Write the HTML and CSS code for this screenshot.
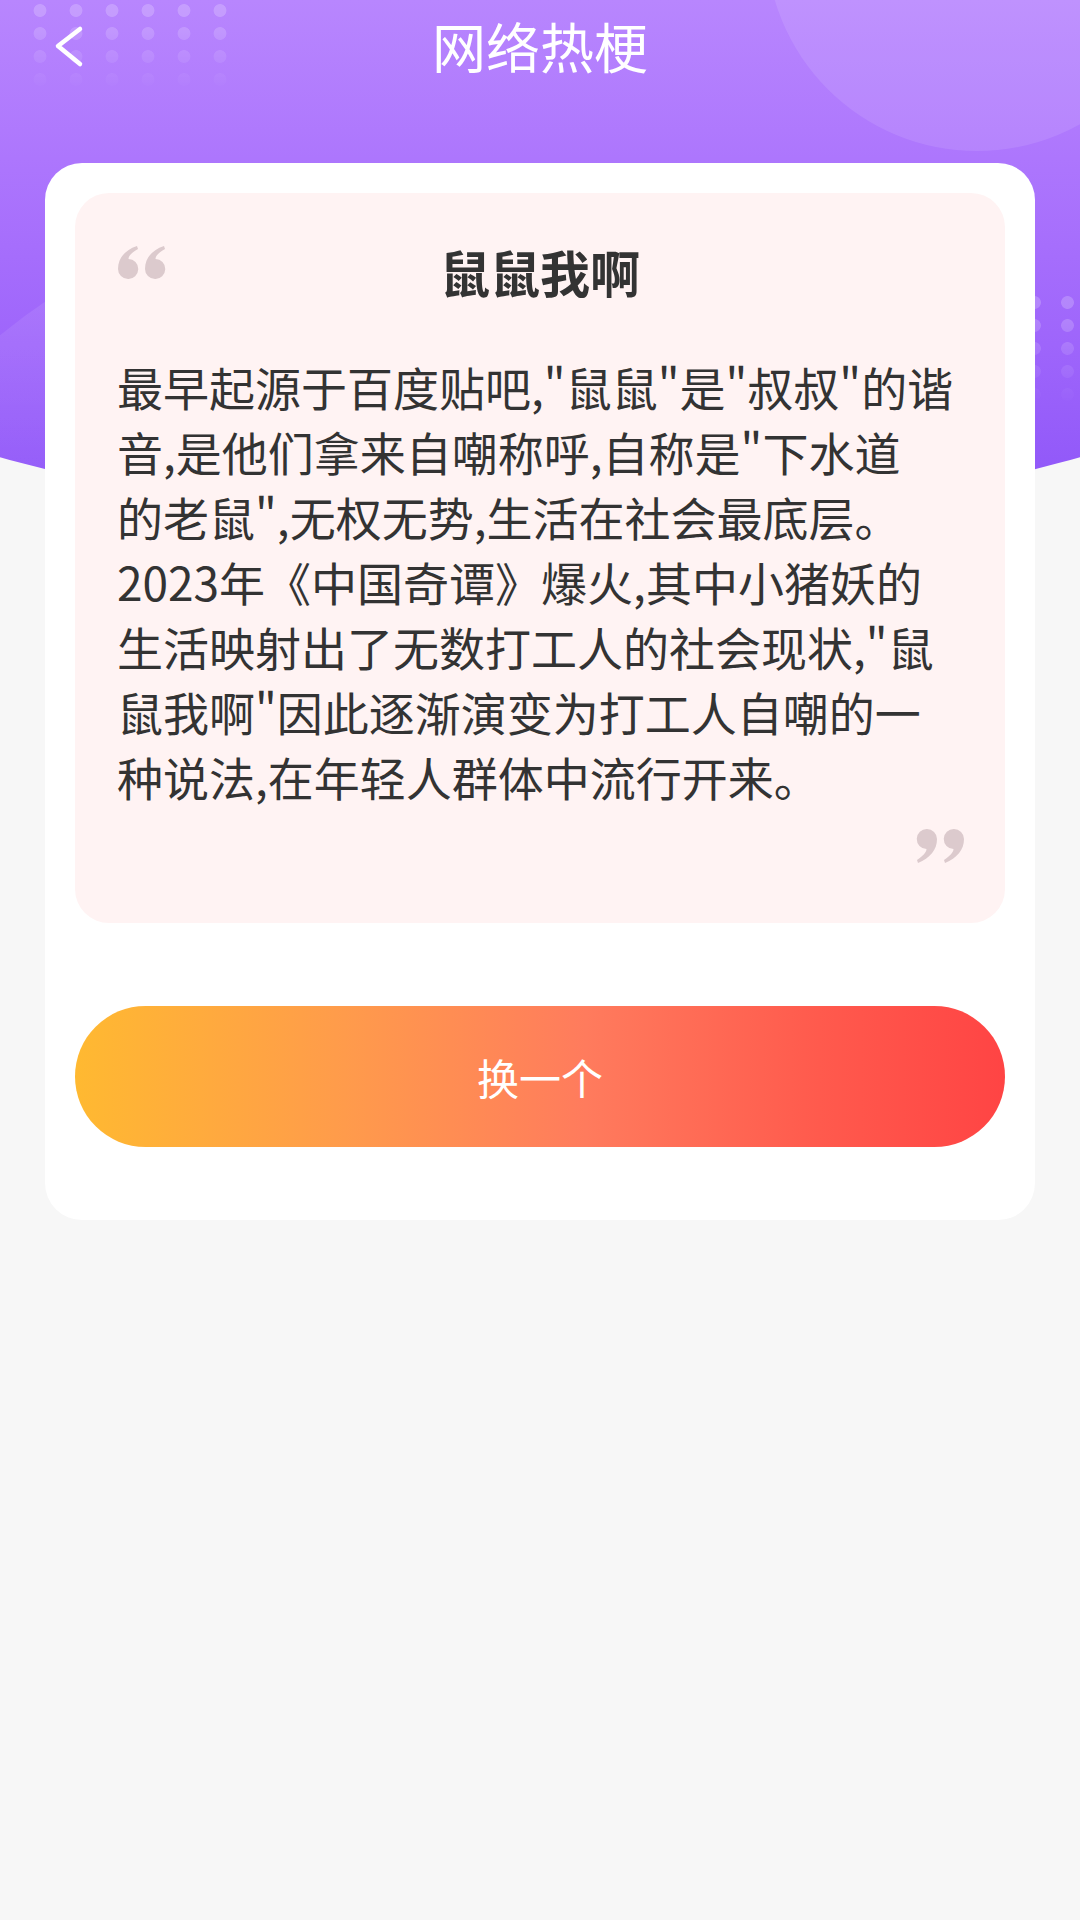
FILE: index.html
```html
<!DOCTYPE html>
<html lang="zh-CN">
<head>
  <meta charset="UTF-8">
  <meta name="viewport" content="width=device-width, initial-scale=1.0">
  <title>网络热梗</title>
  <link rel="stylesheet" href="styles.css">
</head>
<body>

  <div class="page">
    <!-- Purple header -->
    <div class="hero">
      <div class="bubble bubble-top"></div>
      <div class="bubble bubble-left"></div>
      <div class="dots dots-top"></div>
      <div class="dots dots-side"></div>

      <nav class="topbar">
        <a class="back" href="#">
          <svg width="34" height="46" viewBox="0 0 34 46">
            <path d="M26 5 L4 22 L26 40" fill="none" stroke="#fff" stroke-width="4.5" stroke-linecap="round" stroke-linejoin="round"/>
          </svg>
        </a>
        <h1>网络热梗</h1>
        <span></span>
      </nav>
    </div>

    <!-- Meme card -->
    <main class="card">
      <section class="quote-box">
        <div class="quote-head">
          <svg class="mark" width="49" height="34" viewBox="0 0 49 34">
            <g fill="#dccacd" transform="rotate(180 24.5 17)">
              <path d="M11 0 A10 10 0 0 1 21 10 C21 21 14 29 2 33 L1 30 C7 27 10.5 23 10.5 20 A10 10 0 0 1 11 0 Z"/>
              <path d="M38 0 A10 10 0 0 1 48 10 C48 21 41 29 29 33 L28 30 C34 27 37.5 23 37.5 20 A10 10 0 0 1 38 0 Z"/>
            </g>
          </svg>
          <h2>鼠鼠我啊</h2>
        </div>

        <p class="quote-text">最早起源于百度贴吧,"鼠鼠"是"叔叔"的谐<br>音,是他们拿来自嘲称呼,自称是"下水道<br>的老鼠",无权无势,生活在社会最底层。<br>2023年《中国奇谭》爆火,其中小猪妖的<br>生活映射出了无数打工人的社会现状,"鼠<br>鼠我啊"因此逐渐演变为打工人自嘲的一<br>种说法,在年轻人群体中流行开来。</p>

        <div class="quote-foot">
          <svg class="mark" width="49" height="36" viewBox="0 0 49 36">
            <g fill="#dccacd">
              <path d="M11 1 A10 10 0 0 1 21 11 C21 22 14 30 2 35 L1 32 C7 28 10.5 24 10.5 21 A10 10 0 0 1 11 1 Z"/>
              <path d="M38 1 A10 10 0 0 1 48 11 C48 22 41 30 29 35 L28 32 C34 28 37.5 24 37.5 21 A10 10 0 0 1 38 1 Z"/>
            </g>
          </svg>
        </div>
      </section>

      <button class="next-btn">换一个</button>
    </main>
  </div>

</body>
</html>
```

FILE: styles.css
```css
/* Global Styles */
* {
  margin: 0;
  padding: 0;
  box-sizing: border-box;
}

body {
  font-family: "Noto Sans CJK SC", "Noto Sans", sans-serif;
  background: #f7f7f7;
  color: #333;
  width: 1080px;
  min-height: 1920px;
  overflow: hidden;
}

/* Header */
.hero {
  position: relative;
  height: 530px;
  overflow: hidden;
  background: linear-gradient(180deg, #b886fe 0%, #ad76fd 30%, #9e65fb 65%, #8c53f8 100%);
  clip-path: ellipse(1100px 558px at 540px -29px);
}

.bubble {
  position: absolute;
  border-radius: 50%;
}

.bubble-top {
  width: 422px;
  height: 422px;
  left: 766px;
  top: -271px;
  background: rgba(255, 255, 255, 0.1);
}

.bubble-left {
  width: 1260px;
  height: 1260px;
  left: -230px;
  top: 192px;
  background: linear-gradient(180deg, rgba(255, 255, 255, 0.12), rgba(255, 255, 255, 0) 30%);
}

.dots {
  position: absolute;
  background-image: radial-gradient(circle, rgba(255, 255, 255, 0.2) 6px, transparent 6.8px);
  -webkit-mask-image: linear-gradient(180deg, #000 20%, transparent 100%);
  mask-image: linear-gradient(180deg, #000 20%, transparent 100%);
}

.dots-top {
  left: 22px;
  top: -1px;
  width: 216px;
  height: 92px;
  background-size: 36px 23px;
}

.dots-side {
  left: 1018px;
  top: 291px;
  width: 66px;
  height: 115px;
  background-size: 33px 23px;
}

.topbar {
  position: relative;
  height: 92px;
  display: grid;
  grid-template-columns: 160px 1fr 160px;
  align-items: center;
}

.back {
  display: flex;
  padding-left: 54px;
  padding-top: 2px;
}

.topbar h1 {
  text-align: center;
  color: #fff;
  font-size: 54px;
  font-weight: 400;
  line-height: 92px;
}

/* Card */
.card {
  position: relative;
  margin: -367px 45px 0;
  padding: 30px 30px 73px;
  background: #fff;
  border-radius: 37px;
}

.quote-box {
  background: #fff3f3;
  border-radius: 34px;
  padding: 50px 42px 59px;
}

.quote-head {
  display: grid;
  grid-template-columns: 1fr auto 1fr;
  align-items: start;
}

.quote-head .mark {
  margin-top: 2px;
}

.quote-head h2 {
  font-size: 50px;
  font-weight: 700;
  line-height: 56px;
  color: #333;
}

.quote-text {
  margin-top: 55px;
  font-size: 46px;
  line-height: 65px;
  color: #333;
  white-space: nowrap;
}

.quote-foot {
  display: flex;
  justify-content: flex-end;
  margin-top: 19px;
  margin-right: -2px;
}

.next-btn {
  display: block;
  width: 100%;
  height: 141px;
  margin-top: 83px;
  border: none;
  border-radius: 71px;
  background: linear-gradient(90deg, #ffb931 0%, #ff9a4c 30%, #ff7b5d 55%, #ff5a4d 80%, #ff4444 100%);
  color: #fff;
  font-family: inherit;
  font-size: 42px;
  cursor: pointer;
}
```
